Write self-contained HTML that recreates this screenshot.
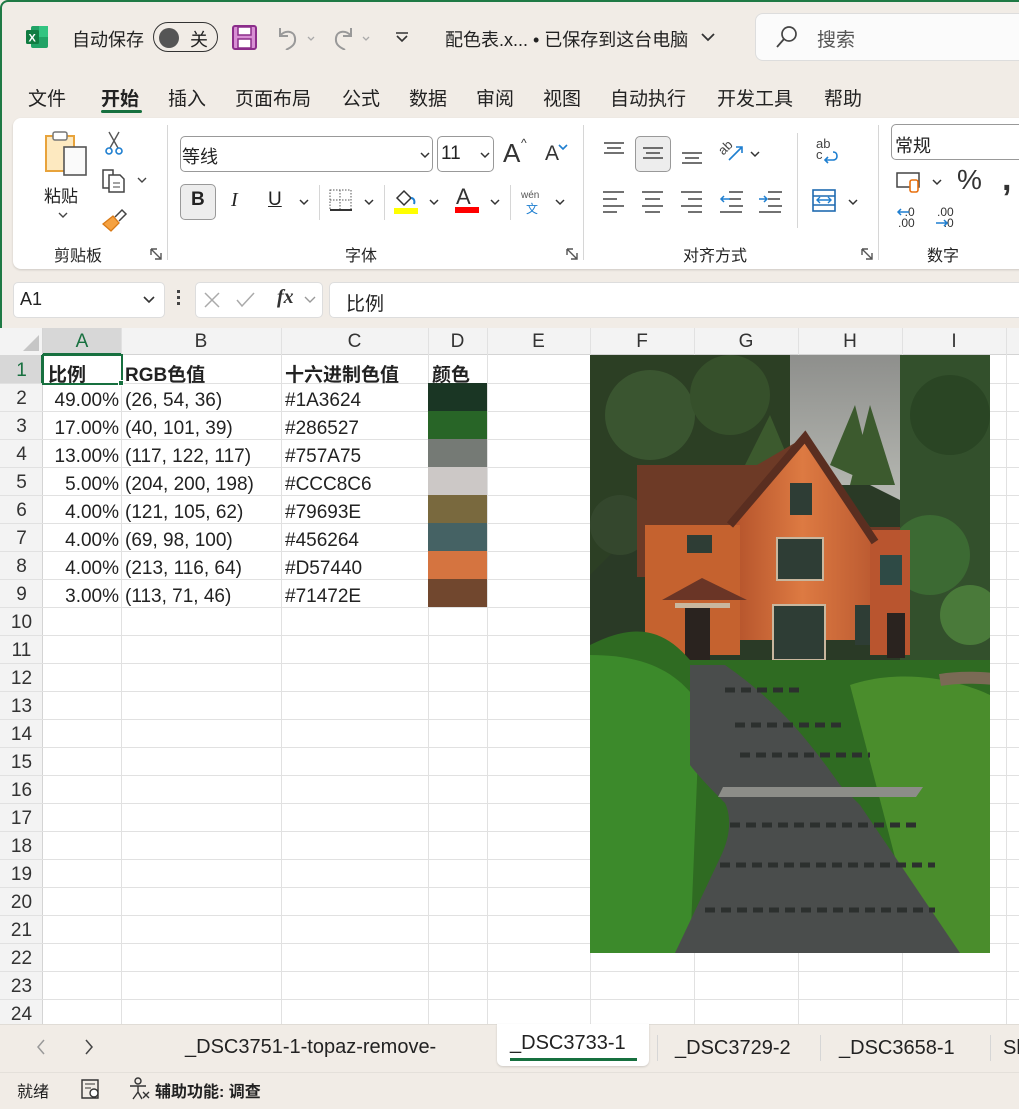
<!DOCTYPE html>
<html><head><meta charset="utf-8"><style>
*{box-sizing:border-box;margin:0;padding:0}
body{width:1019px;height:1109px;overflow:hidden;background:#f1ece6;font-family:"Liberation Sans","Noto Sans CJK SC",sans-serif;color:#222;position:relative}
.a{position:absolute;white-space:nowrap}
.frame{position:absolute;left:0;top:0;width:1030px;height:1108px;border:2px solid #1f7a45;border-radius:8px}
.tab{font-size:19px;top:84px}
.rib{position:absolute;left:13px;top:118px;width:1020px;height:151px;background:#fff;border-radius:8px;box-shadow:0 1px 2px rgba(0,0,0,.15)}
.sep{position:absolute;width:1px;background:#d6d6d6}
.lbl{font-size:16px;top:242px}
.grid{position:absolute;left:0;top:328px;width:1019px;height:696px;background:#fff}
.hl{position:absolute;left:0;width:1019px;height:1px;background:#e1e1e1}
.vl{position:absolute;top:328px;height:696px;width:1px;background:#e1e1e1}
.rn{position:absolute;left:0;width:43px;text-align:center;font-size:19px;color:#333}
.cn{position:absolute;top:331px;font-size:19px;color:#333;text-align:center}
.c{position:absolute;font-size:19px;color:#222}
</style></head><body>
<div class="frame"></div>
<!-- title bar -->
<svg class="a" style="left:25px;top:25px" width="24" height="24"><rect x="6" y="1" width="17" height="22" rx="2" fill="#21a366"/><rect x="14" y="1" width="9" height="11" fill="#33c481"/><rect x="1" y="5" width="13" height="14" rx="1.5" fill="#107c41"/><text x="3.5" y="16.5" font-size="11" font-weight="bold" fill="#fff" font-family="Liberation Sans">X</text></svg>
<div class="a" style="left:72px;top:26px;font-size:18px">自动保存</div>
<div class="a" style="left:153px;top:22px;width:65px;height:30px;border:1.5px solid #333;border-radius:15px"></div>
<div class="a" style="left:159px;top:28px;width:20px;height:20px;border-radius:50%;background:#555"></div>
<div class="a" style="left:190px;top:26px;font-size:18px">关</div>
<svg class="a" style="left:232px;top:25px" width="25" height="25"><rect x="1" y="1" width="23" height="23" rx="2" fill="#d88fd4" stroke="#8b2d8a" stroke-width="2"/><rect x="6" y="2" width="13" height="8" fill="#fff" stroke="#8b2d8a" stroke-width="1.5"/><rect x="6" y="14" width="13" height="9" fill="#fff" stroke="#8b2d8a" stroke-width="1.5"/></svg>
<svg class="a" style="left:275px;top:24px" width="45" height="26"><path d="M5 4v8h8M5 12c4-6 14-6 15 2s-6 10-9 12" fill="none" stroke="#999" stroke-width="2"/><path d="M33 13l3 3 3-3" fill="none" stroke="#aaa" stroke-width="1.3"/></svg>
<svg class="a" style="left:330px;top:24px" width="45" height="26"><path d="M21 4v8h-8M21 12c-4-6-14-6-15 2s6 10 9 12" fill="none" stroke="#999" stroke-width="2"/><path d="M33 13l3 3 3-3" fill="none" stroke="#aaa" stroke-width="1.3"/></svg>
<svg class="a" style="left:394px;top:30px" width="16" height="14"><path d="M2 3h12M3 6l5 5 5-5" fill="none" stroke="#333" stroke-width="1.6"/></svg>
<div class="a" style="left:445px;top:26px;font-size:18px">配色表.x... • 已保存到这台电脑</div>
<svg class="a" style="left:700px;top:31px" width="16" height="12"><path d="M2 3l6 6 6-6" fill="none" stroke="#333" stroke-width="1.8"/></svg>
<div class="a" style="left:755px;top:13px;width:280px;height:48px;background:#fbfbfb;border:1px solid #ddd;border-radius:8px"></div>
<svg class="a" style="left:775px;top:25px" width="24" height="24"><circle cx="14" cy="9" r="7" fill="none" stroke="#444" stroke-width="1.7"/><path d="M9 14L2 22" stroke="#444" stroke-width="1.8"/></svg>
<div class="a" style="left:817px;top:25px;font-size:19px;color:#555">搜索</div>
<!-- tabs -->
<div class="a tab" style="left:28px">文件</div>
<div class="a tab" style="left:101px;font-weight:bold">开始</div>
<div class="a" style="left:101px;top:110px;width:41px;height:3px;background:#17703f;border-radius:2px"></div>
<div class="a tab" style="left:168px">插入</div>
<div class="a tab" style="left:235px">页面布局</div>
<div class="a tab" style="left:342px">公式</div>
<div class="a tab" style="left:409px">数据</div>
<div class="a tab" style="left:476px">审阅</div>
<div class="a tab" style="left:543px">视图</div>
<div class="a tab" style="left:610px">自动执行</div>
<div class="a tab" style="left:717px">开发工具</div>
<div class="a tab" style="left:824px">帮助</div>
<!-- ribbon -->
<div class="rib"></div>
<svg class="a" style="left:44px;top:130px" width="45" height="47"><rect x="2" y="6" width="28" height="35" fill="#fde9c0" stroke="#e8a33b" stroke-width="2"/><rect x="9" y="2" width="14" height="8" rx="2" fill="#fff" stroke="#777" stroke-width="1.5"/><rect x="20" y="17" width="22" height="28" fill="#fafafa" stroke="#555" stroke-width="1.6"/></svg>
<div class="a" style="left:44px;top:182px;font-size:17px">粘贴</div>
<svg class="a" style="left:57px;top:210px" width="12" height="10"><path d="M2 3l4 4 4-4" fill="none" stroke="#444" stroke-width="1.4"/></svg>
<svg class="a" style="left:104px;top:130px" width="20" height="26"><path d="M5 2l9 16M15 2L6 18" stroke="#555" stroke-width="1.4"/><circle cx="5" cy="21" r="3" fill="none" stroke="#1f7fd0" stroke-width="1.6"/><circle cx="15" cy="21" r="3" fill="none" stroke="#1f7fd0" stroke-width="1.6"/></svg>
<svg class="a" style="left:101px;top:168px" width="50" height="26"><path d="M2 2h10l0 18H2z" fill="none" stroke="#444" stroke-width="1.5"/><path d="M8 7h11l4 4v13H8z" fill="#fff" stroke="#444" stroke-width="1.5"/><path d="M12 15h7M12 19h7" stroke="#444"/><path d="M37 10l4 4 4-4" fill="none" stroke="#444" stroke-width="1.4"/></svg>
<svg class="a" style="left:101px;top:207px" width="27" height="25"><path d="M2 17l10-8 6 7-8 8z" fill="#f5a140" stroke="#d97a16" stroke-width="1.3"/><path d="M14 10l7-7 4 4-7 7" fill="none" stroke="#444" stroke-width="1.5"/></svg>
<div class="a lbl" style="left:54px">剪贴板</div>
<svg class="a" style="left:150px;top:248px" width="13" height="13"><path d="M1 1h6M1 1v6M1 1l10 10M11 5v6H5" fill="none" stroke="#555" stroke-width="1.4"/></svg>
<div class="sep" style="left:167px;top:125px;height:135px"></div>
<div class="a" style="left:180px;top:136px;width:253px;height:36px;border:1px solid #999;border-radius:5px"></div>
<div class="a" style="left:182px;top:143px;font-size:18px">等线</div>
<svg class="a" style="left:419px;top:150px" width="12" height="10"><path d="M2 3l4 4 4-4" fill="none" stroke="#333" stroke-width="1.5"/></svg>
<div class="a" style="left:437px;top:136px;width:57px;height:36px;border:1px solid #999;border-radius:5px"></div>
<div class="a" style="left:441px;top:143px;font-size:19px">11</div>
<svg class="a" style="left:479px;top:150px" width="12" height="10"><path d="M2 3l4 4 4-4" fill="none" stroke="#333" stroke-width="1.5"/></svg>
<div class="a" style="left:503px;top:138px;font-size:26px;color:#333">A</div>
<div class="a" style="left:521px;top:136px;font-size:12px;color:#333">^</div>
<div class="a" style="left:545px;top:142px;font-size:21px;color:#333">A</div>
<svg class="a" style="left:558px;top:143px" width="10" height="8"><path d="M1 2l4 4 4-4" fill="none" stroke="#1f7fd0" stroke-width="1.6"/></svg>
<div class="a" style="left:180px;top:184px;width:36px;height:36px;background:#ededed;border:1px solid #999;border-radius:5px"></div>
<div class="a" style="left:191px;top:189px;font-size:19px;font-weight:bold">B</div>
<div class="a" style="left:231px;top:189px;font-size:20px;font-style:italic;font-family:'Liberation Serif',serif">I</div>
<div class="a" style="left:268px;top:189px;font-size:19px;text-decoration:underline">U</div>
<svg class="a" style="left:298px;top:197px" width="12" height="10"><path d="M2 3l4 4 4-4" fill="none" stroke="#333" stroke-width="1.5"/></svg>
<div class="sep" style="left:319px;top:185px;height:35px"></div>
<svg class="a" style="left:329px;top:189px" width="24" height="24"><rect x="1" y="1" width="21" height="20" fill="none" stroke="#555" stroke-dasharray="1.5 1.5"/><path d="M11 1v20M1 11h21" stroke="#555" stroke-dasharray="1.5 1.5"/><path d="M1 21h22" stroke="#333" stroke-width="2"/></svg>
<svg class="a" style="left:363px;top:197px" width="12" height="10"><path d="M2 3l4 4 4-4" fill="none" stroke="#333" stroke-width="1.5"/></svg>
<div class="sep" style="left:384px;top:185px;height:35px"></div>
<svg class="a" style="left:393px;top:188px" width="28" height="26"><path d="M4 10l7-7 7 7-7 7z" fill="none" stroke="#333" stroke-width="1.5"/><path d="M18 10c3 0 4 3 3 6" fill="none" stroke="#1f7fd0" stroke-width="2"/><rect x="1" y="20" width="24" height="6" fill="#ffff00"/></svg>
<svg class="a" style="left:428px;top:197px" width="12" height="10"><path d="M2 3l4 4 4-4" fill="none" stroke="#333" stroke-width="1.5"/></svg>
<div class="a" style="left:456px;top:184px;font-size:22px;color:#333">A</div>
<div class="a" style="left:455px;top:207px;width:24px;height:6px;background:#f00"></div>
<svg class="a" style="left:489px;top:197px" width="12" height="10"><path d="M2 3l4 4 4-4" fill="none" stroke="#333" stroke-width="1.5"/></svg>
<div class="sep" style="left:510px;top:185px;height:35px"></div>
<div class="a" style="left:521px;top:190px;font-size:10px;color:#555">wén</div>
<div class="a" style="left:526px;top:200px;font-size:12px;color:#1f7fd0">文</div>
<svg class="a" style="left:554px;top:197px" width="12" height="10"><path d="M2 3l4 4 4-4" fill="none" stroke="#333" stroke-width="1.5"/></svg>
<div class="a lbl" style="left:345px">字体</div>
<svg class="a" style="left:566px;top:248px" width="13" height="13"><path d="M1 1h6M1 1v6M1 1l10 10M11 5v6H5" fill="none" stroke="#555" stroke-width="1.4"/></svg>
<div class="sep" style="left:583px;top:125px;height:135px"></div>
<!-- alignment -->
<svg class="a" style="left:602px;top:140px" width="24" height="20"><path d="M2 3h20M5 8h14M2 13h20" stroke="#444" stroke-width="1.5"/></svg>
<div class="a" style="left:635px;top:136px;width:36px;height:36px;background:#ededed;border:1px solid #999;border-radius:5px"></div>
<svg class="a" style="left:641px;top:146px" width="24" height="20"><path d="M2 2h20M5 7h14M2 12h20" stroke="#444" stroke-width="1.5"/></svg>
<svg class="a" style="left:680px;top:150px" width="24" height="20"><path d="M2 3h20M5 8h14M2 13h20" stroke="#444" stroke-width="1.5"/></svg>
<div class="a" style="left:718px;top:140px;font-size:13px;color:#444;transform:rotate(-45deg)">ab</div>
<svg class="a" style="left:724px;top:142px" width="22" height="22"><path d="M5 18L18 5M12 5h6v6" fill="none" stroke="#1f7fd0" stroke-width="1.6"/></svg>
<svg class="a" style="left:749px;top:149px" width="12" height="10"><path d="M2 3l4 4 4-4" fill="none" stroke="#333" stroke-width="1.5"/></svg>
<svg class="a" style="left:602px;top:189px" width="185" height="24"><g stroke="#444" stroke-width="1.5"><path d="M1 3h21M1 10h14M1 17h21M1 23h14"/><path d="M40 3h21M43 10h15M40 17h21M43 23h15"/><path d="M79 3h21M86 10h14M79 17h21M86 23h14"/><path d="M127 3h14M127 10h12M127 17h14M118 23h22"/><path d="M166 3h14M166 10h12M166 17h14M157 23h22"/></g><path d="M128 10h-9M122 7l-3 3 3 3" fill="none" stroke="#1f7fd0" stroke-width="1.5"/><path d="M157 10h8M162 7l3 3-3 3" fill="none" stroke="#1f7fd0" stroke-width="1.5"/></svg>
<div class="sep" style="left:797px;top:133px;height:95px"></div>
<div class="a" style="left:816px;top:138px;font-size:13px;line-height:11px;color:#444">ab<br>c</div>
<svg class="a" style="left:823px;top:150px" width="16" height="16"><path d="M2 10h8c3 0 4-2 4-4s-1-4-4-4" fill="none" stroke="#1f7fd0" stroke-width="1.6"/><path d="M5 7l-3 3 3 3" fill="none" stroke="#1f7fd0" stroke-width="1.6"/></svg>
<svg class="a" style="left:812px;top:189px" width="26" height="24"><rect x="1" y="1" width="22" height="21" fill="none" stroke="#1f6ab0" stroke-width="1.6"/><path d="M1 7h22M1 16h22" stroke="#1f6ab0" stroke-width="1.4"/><path d="M5 11h14M8 8l-3 3 3 3M16 8l3 3-3 3" fill="none" stroke="#1f7fd0" stroke-width="1.4"/></svg>
<svg class="a" style="left:847px;top:197px" width="12" height="10"><path d="M2 3l4 4 4-4" fill="none" stroke="#333" stroke-width="1.5"/></svg>
<div class="a lbl" style="left:683px">对齐方式</div>
<svg class="a" style="left:861px;top:248px" width="13" height="13"><path d="M1 1h6M1 1v6M1 1l10 10M11 5v6H5" fill="none" stroke="#555" stroke-width="1.4"/></svg>
<div class="sep" style="left:878px;top:125px;height:135px"></div>
<div class="a" style="left:891px;top:124px;width:140px;height:36px;border:1px solid #999;border-radius:5px"></div>
<div class="a" style="left:895px;top:132px;font-size:18px">常规</div>
<svg class="a" style="left:896px;top:171px" width="25" height="22"><rect x="1" y="2" width="22" height="14" fill="none" stroke="#444" stroke-width="1.5"/><rect x="14" y="9" width="8" height="12" rx="2" fill="#fff" stroke="#e8700f" stroke-width="1.6"/></svg>
<svg class="a" style="left:931px;top:177px" width="12" height="10"><path d="M2 3l4 4 4-4" fill="none" stroke="#333" stroke-width="1.5"/></svg>
<div class="a" style="left:957px;top:164px;font-size:28px;color:#333">%</div>
<div class="a" style="left:1002px;top:160px;font-size:34px;font-weight:bold;color:#333">,</div>
<div class="a" style="left:898px;top:207px;font-size:12px;line-height:11px;color:#333">&nbsp;&nbsp;.0<br>.00</div>
<svg class="a" style="left:896px;top:207px" width="14" height="10"><path d="M13 5H2M5 2L2 5l3 3" fill="none" stroke="#1f7fd0" stroke-width="1.5"/></svg>
<div class="a" style="left:937px;top:207px;font-size:12px;line-height:11px;color:#333">.00<br>&nbsp;&nbsp;.0</div>
<svg class="a" style="left:935px;top:218px" width="14" height="10"><path d="M1 5h11M9 2l3 3-3 3" fill="none" stroke="#1f7fd0" stroke-width="1.5"/></svg>
<div class="a lbl" style="left:927px">数字</div>
<!-- formula bar -->
<div class="a" style="left:13px;top:282px;width:152px;height:36px;background:#fff;border:1px solid #ddd;border-radius:5px"></div>
<div class="a" style="left:20px;top:289px;font-size:18px">A1</div>
<svg class="a" style="left:142px;top:295px" width="14" height="10"><path d="M2 2l5 5 5-5" fill="none" stroke="#333" stroke-width="1.6"/></svg>
<div class="a" style="left:177px;top:290px;width:3px;height:3px;background:#444;box-shadow:0 6px 0 #444,0 12px 0 #444"></div>
<div class="a" style="left:195px;top:282px;width:128px;height:36px;background:#fff;border:1px solid #ddd;border-radius:5px"></div>
<svg class="a" style="left:202px;top:290px" width="60" height="20"><path d="M3 3l14 14M17 3L3 17" stroke="#aaa" stroke-width="1.5"/><path d="M35 10l5 6 12-13" fill="none" stroke="#aaa" stroke-width="1.5"/></svg>
<div class="a" style="left:277px;top:286px;font-size:20px;font-style:italic;font-weight:bold;font-family:'Liberation Serif',serif;color:#333">fx</div>
<svg class="a" style="left:303px;top:295px" width="14" height="10"><path d="M2 2l5 5 5-5" fill="none" stroke="#999" stroke-width="1.4"/></svg>
<div class="a" style="left:329px;top:282px;width:700px;height:36px;background:#fff;border:1px solid #ddd;border-radius:5px"></div>
<div class="a" style="left:346px;top:289px;font-size:19px">比例</div>
<!-- grid -->
<div class="grid"></div>
<div class="a" style="left:0;top:328px;width:1019px;height:27px;background:#f3f3f3;border-bottom:1px solid #d4d4d4"></div>
<div class="a" style="left:0;top:328px;width:43px;height:696px;background:#f3f3f3;border-right:1px solid #d4d4d4"></div>
<div class="a" style="left:43px;top:328px;width:78px;height:27px;background:#d7d7d7;border-bottom:2px solid #17703f"></div>
<div class="a" style="left:0;top:355px;width:43px;height:28px;background:#d7d7d7;border-right:2px solid #17703f"></div>
<svg class="a" style="left:22px;top:334px" width="18" height="18"><path d="M17 1V17H1z" fill="#c6c6c6"/></svg>
<div class="vl" style="left:121px"></div><div class="vl" style="left:281px"></div><div class="vl" style="left:428px"></div><div class="vl" style="left:487px"></div><div class="vl" style="left:590px"></div><div class="vl" style="left:694px"></div><div class="vl" style="left:798px"></div><div class="vl" style="left:902px"></div><div class="vl" style="left:1006px"></div>
<div class="hl" style="top:383px"></div><div class="hl" style="top:411px"></div><div class="hl" style="top:439px"></div><div class="hl" style="top:467px"></div><div class="hl" style="top:495px"></div><div class="hl" style="top:523px"></div><div class="hl" style="top:551px"></div><div class="hl" style="top:579px"></div><div class="hl" style="top:607px"></div><div class="hl" style="top:635px"></div><div class="hl" style="top:663px"></div><div class="hl" style="top:691px"></div><div class="hl" style="top:719px"></div><div class="hl" style="top:747px"></div><div class="hl" style="top:775px"></div><div class="hl" style="top:803px"></div><div class="hl" style="top:831px"></div><div class="hl" style="top:859px"></div><div class="hl" style="top:887px"></div><div class="hl" style="top:915px"></div><div class="hl" style="top:943px"></div><div class="hl" style="top:971px"></div><div class="hl" style="top:999px"></div>
<div class="cn" style="left:43px;width:78px;color:#17703f">A</div><div class="cn" style="left:121px;width:160px">B</div><div class="cn" style="left:281px;width:147px">C</div><div class="cn" style="left:428px;width:59px">D</div><div class="cn" style="left:487px;width:103px">E</div><div class="cn" style="left:590px;width:104px">F</div><div class="cn" style="left:694px;width:104px">G</div><div class="cn" style="left:798px;width:104px">H</div><div class="cn" style="left:902px;width:104px">I</div>
<div class="rn" style="top:360px;color:#17703f">1</div><div class="rn" style="top:388px">2</div><div class="rn" style="top:416px">3</div><div class="rn" style="top:444px">4</div><div class="rn" style="top:472px">5</div><div class="rn" style="top:500px">6</div><div class="rn" style="top:528px">7</div><div class="rn" style="top:556px">8</div><div class="rn" style="top:584px">9</div><div class="rn" style="top:612px">10</div><div class="rn" style="top:640px">11</div><div class="rn" style="top:668px">12</div><div class="rn" style="top:696px">13</div><div class="rn" style="top:724px">14</div><div class="rn" style="top:752px">15</div><div class="rn" style="top:780px">16</div><div class="rn" style="top:808px">17</div><div class="rn" style="top:836px">18</div><div class="rn" style="top:864px">19</div><div class="rn" style="top:892px">20</div><div class="rn" style="top:920px">21</div><div class="rn" style="top:948px">22</div><div class="rn" style="top:976px">23</div><div class="rn" style="top:1004px">24</div>
<!-- colors -->
<div class="a" style="left:428px;top:383px;width:59px;height:28px;background:#1A3624"></div>
<div class="a" style="left:428px;top:411px;width:59px;height:28px;background:#286527"></div>
<div class="a" style="left:428px;top:439px;width:59px;height:28px;background:#757A75"></div>
<div class="a" style="left:428px;top:467px;width:59px;height:28px;background:#CCC8C6"></div>
<div class="a" style="left:428px;top:495px;width:59px;height:28px;background:#79693E"></div>
<div class="a" style="left:428px;top:523px;width:59px;height:28px;background:#456264"></div>
<div class="a" style="left:428px;top:551px;width:59px;height:28px;background:#D57440"></div>
<div class="a" style="left:428px;top:579px;width:59px;height:28px;background:#71472E"></div>
<!-- cell text -->
<div class="c" style="left:48px;top:360px;font-weight:bold">比例</div>
<div class="c" style="left:125px;top:360px;font-weight:bold">RGB色值</div>
<div class="c" style="left:285px;top:360px;font-weight:bold">十六进制色值</div>
<div class="c" style="left:432px;top:360px;font-weight:bold">颜色</div>
<div class="a" style="left:42px;top:354px;width:81px;height:31px;border:2px solid #17703f"></div>
<div class="a" style="left:118px;top:380px;width:6px;height:6px;background:#17703f;border:1px solid #fff"></div>
<div class="c" style="left:43px;top:390px;width:76px;text-align:right">49.00%</div><div class="c" style="left:125px;top:390px">(26, 54, 36)</div><div class="c" style="left:285px;top:390px">#1A3624</div>
<div class="c" style="left:43px;top:418px;width:76px;text-align:right">17.00%</div><div class="c" style="left:125px;top:418px">(40, 101, 39)</div><div class="c" style="left:285px;top:418px">#286527</div>
<div class="c" style="left:43px;top:446px;width:76px;text-align:right">13.00%</div><div class="c" style="left:125px;top:446px">(117, 122, 117)</div><div class="c" style="left:285px;top:446px">#757A75</div>
<div class="c" style="left:43px;top:474px;width:76px;text-align:right">5.00%</div><div class="c" style="left:125px;top:474px">(204, 200, 198)</div><div class="c" style="left:285px;top:474px">#CCC8C6</div>
<div class="c" style="left:43px;top:502px;width:76px;text-align:right">4.00%</div><div class="c" style="left:125px;top:502px">(121, 105, 62)</div><div class="c" style="left:285px;top:502px">#79693E</div>
<div class="c" style="left:43px;top:530px;width:76px;text-align:right">4.00%</div><div class="c" style="left:125px;top:530px">(69, 98, 100)</div><div class="c" style="left:285px;top:530px">#456264</div>
<div class="c" style="left:43px;top:558px;width:76px;text-align:right">4.00%</div><div class="c" style="left:125px;top:558px">(213, 116, 64)</div><div class="c" style="left:285px;top:558px">#D57440</div>
<div class="c" style="left:43px;top:586px;width:76px;text-align:right">3.00%</div><div class="c" style="left:125px;top:586px">(113, 71, 46)</div><div class="c" style="left:285px;top:586px">#71472E</div>
<!-- picture -->
<svg class="a" style="left:590px;top:355px" width="400" height="598" viewBox="0 0 400 598">
<defs><linearGradient id="sky" x1="0" y1="0" x2="0" y2="1"><stop offset="0" stop-color="#8e8f8c"/><stop offset="1" stop-color="#b8bab4"/></linearGradient>
<linearGradient id="wall" x1="0" y1="0" x2="1" y2="0"><stop offset="0" stop-color="#b5542c"/><stop offset=".5" stop-color="#dd7a42"/><stop offset="1" stop-color="#bd5c32"/></linearGradient></defs>
<rect width="400" height="598" fill="#2a3a26"/>
<path d="M195 0h125v150l-40-20-40 0-45 20z" fill="url(#sky)"/>
<path d="M0 0h200v120c-40 0-90 10-140 40L0 220z" fill="#2c3f24"/>
<circle cx="60" cy="60" r="45" fill="#3a5530"/><circle cx="140" cy="40" r="40" fill="#36502b"/><circle cx="30" cy="170" r="30" fill="#34472d"/>
<path d="M310 0h90v310h-90z" fill="#33502c"/>
<circle cx="360" cy="60" r="40" fill="#2a4524"/><circle cx="340" cy="200" r="40" fill="#3c6a33"/><circle cx="380" cy="260" r="30" fill="#4a7a3a"/>
<path d="M150 120l30-60 25 60z M240 110l25-60 20 80z M260 130l20-80 25 80z" fill="#3c5a2e"/>
<path d="M47 110h120l48-28 65 90h30v50H47z" fill="#6d3a26"/>
<path d="M145 165l70-85 65 95v110H145z" fill="url(#wall)"/>
<path d="M55 170h95v130H55z" fill="#c5622f"/>
<path d="M280 175h40v125h-40z" fill="#b9552f"/>
<path d="M140 170l75-88 70 105" fill="none" stroke="#5a2e20" stroke-width="8"/>
<rect x="187" y="183" width="46" height="42" fill="#2e3d35" stroke="#c9b79e" stroke-width="2"/>
<rect x="183" y="250" width="52" height="55" fill="#2e3d35" stroke="#c9b79e" stroke-width="2"/>
<rect x="200" y="128" width="22" height="32" fill="#2e3d35"/>
<rect x="97" y="180" width="25" height="18" fill="#2e3d35"/>
<rect x="265" y="250" width="15" height="40" fill="#2e3d35"/>
<rect x="290" y="200" width="22" height="30" fill="#2e4a45"/>
<path d="M72 245l40-22 45 22z" fill="#6a3526"/>
<rect x="85" y="248" width="55" height="5" fill="#c9b79e"/>
<rect x="95" y="253" width="25" height="52" fill="#2a231f"/>
<rect x="297" y="258" width="18" height="45" fill="#2a231f"/>
<path d="M0 290c40-20 70-20 100 15h300v293H0z" fill="#2f6b22"/>
<path d="M0 300c60 0 90 20 110 50l-10 248H0z" fill="#3c8a2b"/>
<path d="M260 330c60-20 120 0 140 10v258H330z" fill="#4a8d2c"/>
<path d="M100 310h35c50 35 80 70 115 120l20 20 100 148H85l45-95c10-20 12-40 5-55-10-10-25-25-35-38z" fill="#4a4d4c"/>
<path d="M133 432h200l-7 10H128z" fill="#8c8d88"/>
<path d="M135 335h80M145 370h110M150 400h130M140 470h190M130 510h215M115 555h230" stroke="#2c302e" stroke-width="5" stroke-dasharray="10 6"/>
<path d="M420 325c-10 0-40-5-70 0" stroke="#7a6a55" stroke-width="12"/>
</svg>
<!-- sheet tabs -->
<div class="a" style="left:0;top:1024px;width:1019px;height:48px;background:#f1ece6;border-top:1px solid #e0dcd6"></div>
<svg class="a" style="left:33px;top:1038px" width="70" height="18"><path d="M11 2L5 9l6 7" fill="none" stroke="#999" stroke-width="1.5"/><path d="M53 2l6 7-6 7" fill="none" stroke="#444" stroke-width="1.5"/></svg>
<div class="a" style="left:185px;top:1036px;font-size:20px">_DSC3751-1-topaz-remove-</div>
<div class="a" style="left:497px;top:1024px;width:152px;height:42px;background:#fff;border-radius:0 0 6px 6px;box-shadow:0 1px 2px rgba(0,0,0,.15)"></div>
<div class="a" style="left:510px;top:1032px;font-size:20px">_DSC3733-1</div>
<div class="a" style="left:510px;top:1058px;width:127px;height:3px;background:#17703f"></div>
<div class="a" style="left:675px;top:1037px;font-size:20px">_DSC3729-2</div>
<div class="sep" style="left:820px;top:1035px;height:26px"></div>
<div class="sep" style="left:657px;top:1035px;height:26px"></div>
<div class="sep" style="left:990px;top:1035px;height:26px"></div>
<div class="a" style="left:839px;top:1037px;font-size:20px">_DSC3658-1</div>
<div class="a" style="left:1003px;top:1037px;font-size:20px">Sl</div>
<!-- status -->
<div class="a" style="left:0;top:1072px;width:1019px;height:37px;background:#f1ece6;border-top:1px solid #e4e0da"></div>
<div class="a" style="left:17px;top:1078px;font-size:16px">就绪</div>
<svg class="a" style="left:80px;top:1078px" width="22" height="22"><path d="M2 2h16v18H2z" fill="none" stroke="#333" stroke-width="1.4"/><path d="M5 6h10M5 10h6" stroke="#333"/><circle cx="14" cy="15" r="4" fill="#fff" stroke="#333" stroke-width="1.4"/></svg>
<svg class="a" style="left:128px;top:1077px" width="24" height="24"><circle cx="10" cy="4" r="3" fill="none" stroke="#333" stroke-width="1.4"/><path d="M2 9h16M10 9v6l-5 7M10 15l4 7M15 15l6 6M21 15l-6 6" fill="none" stroke="#333" stroke-width="1.4"/></svg>
<div class="a" style="left:155px;top:1078px;font-size:16px;font-weight:bold">辅助功能: 调查</div>
</body></html>
